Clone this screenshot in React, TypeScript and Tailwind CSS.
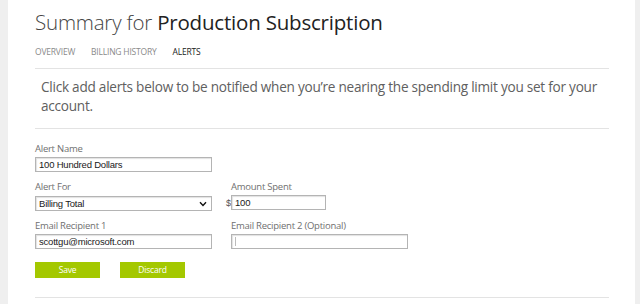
import React from 'react';

const labelCls = "block text-[9.5px] leading-[12px] tracking-[-0.25px] text-[#707070] font-['Open_Sans',sans-serif]";
const inputCls =
  "h-[15px] border border-[#b4b4b4] shadow-[inset_1px_1px_1px_rgba(0,0,0,0.12)] bg-white px-[3px] text-[9.5px] leading-[13px] tracking-[-0.2px] text-[#1a1a1a] font-['Liberation_Sans',Arial,sans-serif] flex items-center";

const Field: React.FC<{ label: string; children: React.ReactNode }> = ({ label, children }) => (
  <div className="flex flex-col gap-[2px]">
    <span className={labelCls}>{label}</span>
    {children}
  </div>
);

const App: React.FC = () => {
  return (
    <div className="h-[304px] w-[640px] bg-[#efefef] pl-[8px] pr-[5px] overflow-hidden">
      <div className="h-full bg-white pl-[27px] pr-[26px] pt-[7px] font-['Open_Sans',sans-serif]">
        {/* Titel */}
        <h1 className="text-[20.5px] leading-[30px] text-[#222] tracking-[-0.2px]">
          <span className="font-light text-[#444]">Summary for </span>
          <span className="font-normal">Production Subscription</span>
        </h1>

        {/* Tabs */}
        <nav className="mt-[9px] flex gap-[16px] text-[8.5px] leading-[12px] tracking-[-0.2px]">
          <span className="text-[#8a8a8a]">OVERVIEW</span>
          <span className="text-[#8a8a8a]">BILLING HISTORY</span>
          <span className="text-[#222]">ALERTS</span>
        </nav>

        <div className="mt-[10px] border-t border-[#e3e3e3]" />

        <p className="pl-[6px] pt-[8px] pb-[13px] text-[13.6px] leading-[19px] text-[#606060] tracking-[-0.25px] pr-[4px]">
          Click add alerts below to be notified when you’re nearing the spending limit you set for your account.
        </p>

        <div className="border-t border-[#e3e3e3]" />

        {/* Form */}
        <div className="pt-[14px] grid grid-cols-[177px_177px] gap-x-[19px] gap-y-[9px]">
          <Field label="Alert Name">
            <div className={inputCls}>100 Hundred Dollars</div>
          </Field>
          <div />

          <Field label="Alert For">
            <div className={inputCls + " border-[#8c8c8c] justify-between mt-[1px]"}>
              <span>Billing Total</span>
              <svg width="8" height="6" viewBox="0 0 8 6" className="mr-[1px]">
                <path d="M1 1.2 L4 4.4 L7 1.2" fill="none" stroke="#111" strokeWidth="1.4" />
              </svg>
            </div>
          </Field>
          <Field label="Amount Spent">
            <div className="flex items-center -ml-[5px]">
              <span className="w-[5px] text-[9px] leading-[12px] text-[#555] font-['Liberation_Sans',Arial,sans-serif]">$</span>
              <div className={inputCls + " w-[95px]"}>100</div>
            </div>
          </Field>

          <Field label="Email Recipient 1">
            <div className={inputCls}>scottgu@microsoft.com</div>
          </Field>
          <Field label="Email Recipient 2 (Optional)">
            <div className={inputCls}>
              <span className="block h-[9px] w-px bg-[#bbb]" />
            </div>
          </Field>
        </div>

        {/* Knoppen */}
        <div className="mt-[13px] flex gap-[20px]">
          <button className="h-[16px] w-[65px] bg-[#a4c800] text-white text-[8.5px] leading-[16px] tracking-[-0.2px]">Save</button>
          <button className="h-[16px] w-[65px] bg-[#a4c800] text-white text-[8.5px] leading-[16px] tracking-[-0.2px]">Discard</button>
        </div>

        <div className="mt-[19px] border-t border-[#e3e3e3]" />
      </div>
    </div>
  );
};

export default App;
